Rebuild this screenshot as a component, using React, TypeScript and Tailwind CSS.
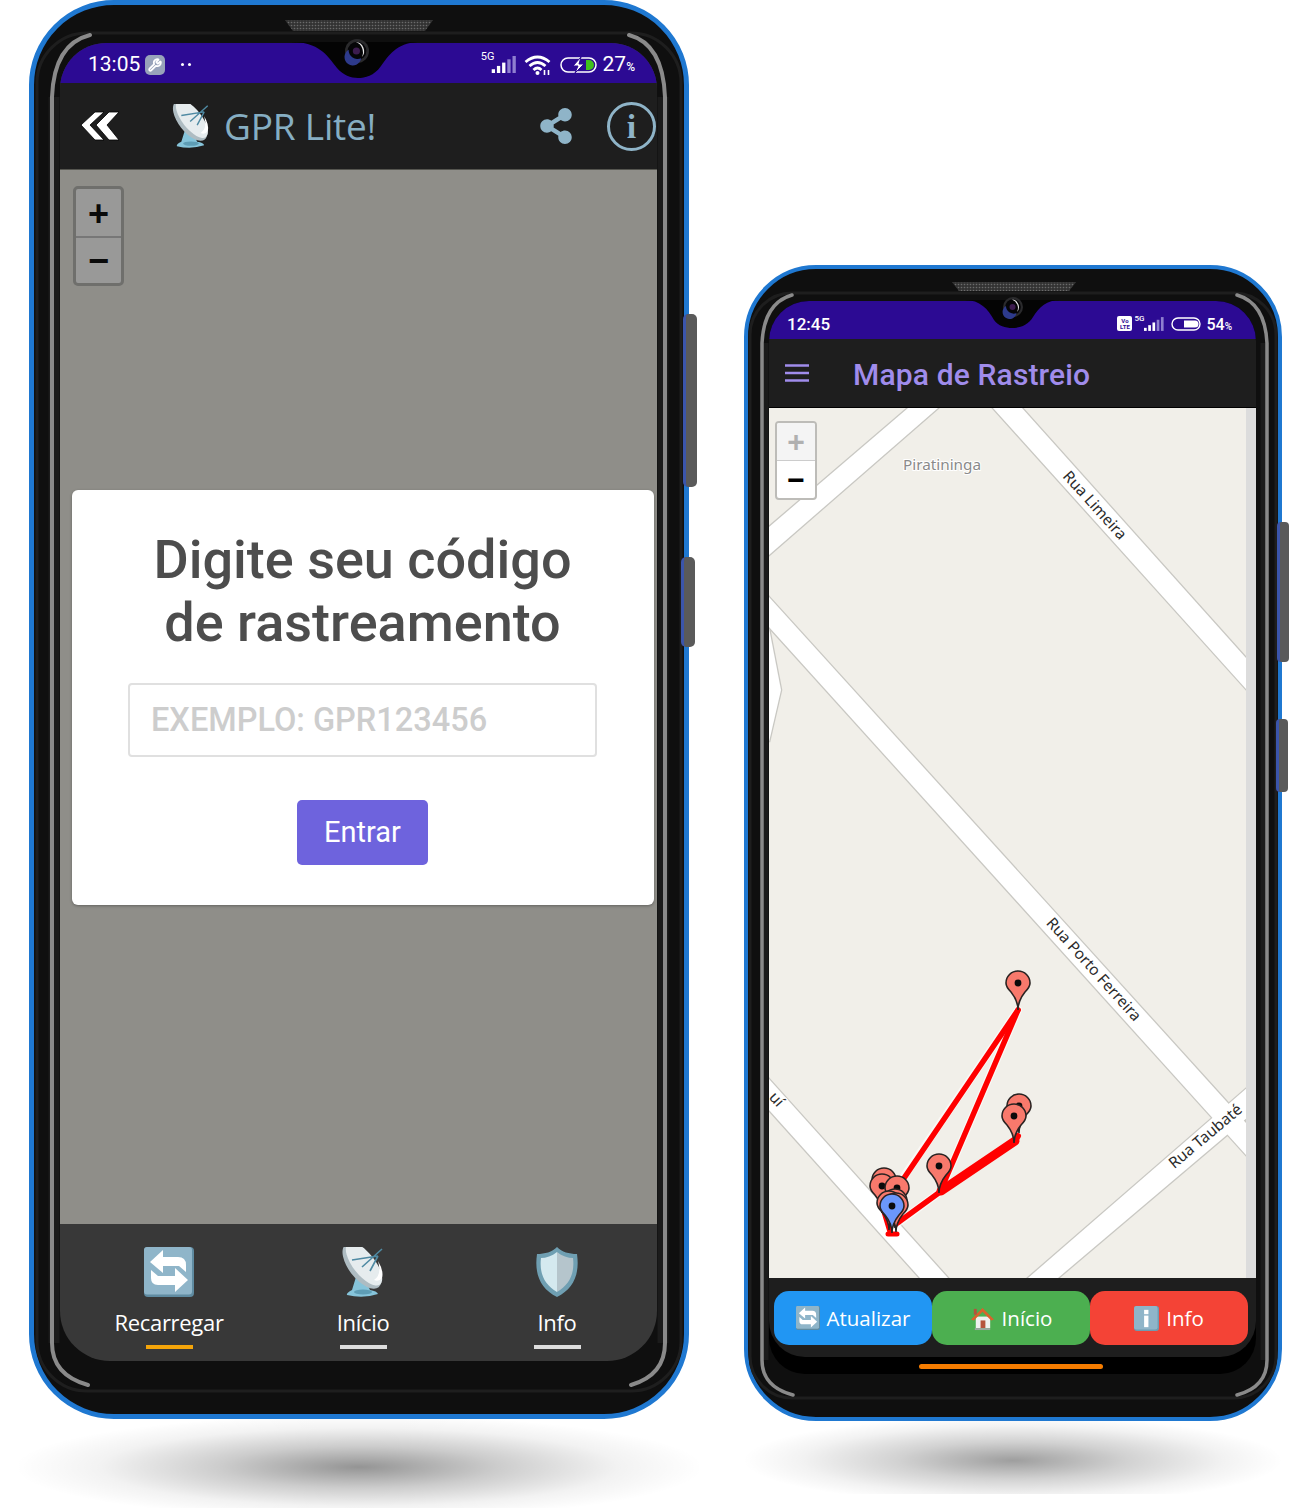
import React from "react";
import { FaShareAlt } from "react-icons/fa";
import { Wrench } from "lucide-react";

function Satellite({ className }: { className: string }) {
  return (
    <svg viewBox="0 0 50 50" className={className}>
      <path d="M18 30 L14 43 Q8 46 9 48 Q25 52 40 47 Q39 44 32 43 L28 34 Z" fill="#86c4da" />
      <ellipse cx="25" cy="45" rx="9" ry="2.5" fill="#5e9db5" />
      <ellipse cx="24" cy="19" rx="27" ry="13" transform="rotate(52 24 19)" fill="#aebcc2" />
      <ellipse cx="26" cy="17" rx="26" ry="11" transform="rotate(52 26 17)" fill="#e6ecee" />
      <path d="M36 33 Q44 28 40 14 Q46 24 44 31 Q41 35 36 33Z" fill="#ffffff" />
      <path d="M24 20 L44 2 M14 13 L40 9 M40 9 L32 24" stroke="#4f8aa3" strokeWidth="1.6" fill="none" />
    </svg>
  );
}

function RepeatSquare({ className }: { className: string }) {
  return (
    <svg viewBox="0 0 50 50" className={className}>
      <rect x="0" y="0" width="50" height="50" rx="4" fill="#5f8ba1" />
      <rect x="0" y="0" width="48" height="47.5" rx="3" fill="#8fb5c9" />
      <path d="M6 15 L19 3 V10 H34 Q42 10 42 18 V25 L35 19 H19 V26 Z" fill="#fff" />
      <path d="M44 33 L31 45 V38 H14 Q7 38 7 31 V23 L14 29 H31 V21 Z" fill="#fff" />
    </svg>
  );
}

function Shield({ className }: { className: string }) {
  return (
    <svg viewBox="0 0 50 50" className={className}>
      <path d="M25 0 C30 5 37 7 45 7 C48 28 41 42 25 50 C9 42 2 28 5 7 C13 7 20 5 25 0 Z" fill="#6f9fb2" />
      <path d="M25 5 C20 9 14 11 9 11 C7 27 13 38 25 45 Z" fill="#d4e9ef" />
      <path d="M25 5 C30 9 36 11 41 11 C43 27 37 38 25 45 Z" fill="#b5c5cc" />
    </svg>
  );
}

function House() {
  return (
    <svg viewBox="0 0 26 26" className="h-[25px] w-[25px]">
      <rect x="6" y="11" width="15" height="12" fill="#eef0ee" />
      <rect x="11" y="15" width="5" height="8" fill="#b5533c" />
      <path d="M1 14 L13 2 L25 14 L22 15 L13 6 L4 15 Z" fill="#d9622b" />
      <rect x="4" y="3" width="3" height="6" fill="#b5533c" />
      <rect x="5" y="23" width="16" height="2" fill="#9aa7a0" />
    </svg>
  );
}

function InfoSquare() {
  return (
    <svg viewBox="0 0 26 26" className="h-[25px] w-[25px]">
      <rect width="26" height="26" rx="3" fill="#6f9bb0" />
      <rect width="24.5" height="24.5" rx="2.5" fill="#8fb5c9" />
      <rect x="10.5" y="4" width="4.5" height="4.5" fill="#fff" />
      <rect x="10.5" y="10" width="4.5" height="12" fill="#fff" />
    </svg>
  );
}

function Camera({ cx, cy, r }: { cx: number; cy: number; r: number }) {
  return (
    <g>
      <circle cx={cx} cy={cy} r={r} fill="#2a2a2c" />
      <circle cx={cx} cy={cy} r={r * 0.78} fill="#050507" />
      <path
        d={`M${cx - r * 0.7} ${cy - r * 0.1} A${r * 0.7} ${r * 0.7} 0 1 0 ${cx + r * 0.35} ${cy + r * 0.6} A${r * 0.75} ${r * 0.75} 0 0 1 ${cx - r * 0.7} ${cy - r * 0.1}Z`}
        fill="#2d3a8c"
      />
      <path
        d={`M${cx - r * 0.1} ${cy - r * 0.75} A${r * 0.75} ${r * 0.75} 0 0 1 ${cx + r * 0.4} ${cy + r * 0.5} A${r * 0.9} ${r * 0.9} 0 0 0 ${cx - r * 0.1} ${cy - r * 0.75}Z`}
        fill="#e8e8e8"
      />
      <circle cx={cx - r * 0.05} cy={cy} r={r * 0.3} fill="#3c1c4f" />
    </g>
  );
}

function Bars({ className }: { className: string }) {
  return (
    <svg viewBox="0 0 26 18" className={className}>
      <rect x="0" y="14" width="3.5" height="4" fill="#fff" />
      <rect x="5.5" y="10.5" width="3.5" height="7.5" fill="#fff" />
      <rect x="11" y="7" width="3.5" height="11" fill="#fff" />
      <rect x="16.5" y="3.5" width="3.5" height="14.5" fill="#8f7fd0" />
      <rect x="22" y="0" width="3.5" height="18" fill="#8f7fd0" />
    </svg>
  );
}

function Roads() {
  const polys = [
    "908,408 938,408 769,555 769,527",
    "993,408 1022,408 1247,659 1247,690",
    "769,597 1247,1124 1247,1156 769,627",
    "1247,1088 1247,1118 1058,1278 1028,1278",
    "769,1079 948,1278 920,1278 769,1110",
    "769,628 781,690 769,742",
  ];
  return (
    <g>
      {polys.map((p) => (
        <polygon key={p} points={p} fill="#fff" stroke="#c9c8c3" strokeWidth="2.6" />
      ))}
      {polys.map((p) => (
        <polygon key={p + "f"} points={p} fill="#fff" />
      ))}
    </g>
  );
}

function Pin({ x, y, fill = "#f8796c" }: { x: number; y: number; fill?: string }) {
  return (
    <g transform={`translate(${x} ${y})`}>
      <path
        d="M0 0 C0 -8 -3 -13 -7 -18 C-10 -21 -12 -24 -12 -27 A12 12 0 1 1 12 -27 C12 -24 10 -21 7 -18 C3 -13 0 -8 0 0 Z"
        fill={fill}
        stroke="#2a2322"
        strokeWidth="1.6"
      />
      <circle cx="0" cy="-27" r="3.4" fill="#0b0b0b" />
    </g>
  );
}

function MapLabel({ x, y, a, children }: { x: number; y: number; a: number; children: React.ReactNode }) {
  return (
    <text
      x={x}
      y={y}
      transform={`rotate(${a} ${x} ${y})`}
      textAnchor="middle"
      dominantBaseline="middle"
      fontFamily="'Noto Sans', sans-serif"
      fontSize="15.5"
      fill="#2b2b2b"
      stroke="#fff"
      strokeWidth="2.5"
      paintOrder="stroke"
    >
      {children}
    </text>
  );
}

function TrackMap() {
  return (
    <svg viewBox="769 408 477 870" className="h-[870px] w-[477px]">
      <rect x="769" y="408" width="477" height="870" fill="#f1efe9" />
      <Roads />
      <text
        x="942"
        y="466"
        textAnchor="middle"
        dominantBaseline="middle"
        fontFamily="'Noto Sans', sans-serif"
        fontSize="15.3"
        fill="#8a8a8a"
        stroke="#fff"
        strokeWidth="2"
        paintOrder="stroke"
      >
        Piratininga
      </text>
      <MapLabel x={1094} y={506} a={48}>Rua Limeira</MapLabel>
      <MapLabel x={1093} y={970} a={48}>Rua Porto Ferreira</MapLabel>
      <MapLabel x={1206} y={1137} a={-40}>Rua Taubaté</MapLabel>
      <MapLabel x={776} y={1100} a={48}>uí</MapLabel>
      <g fill="none" stroke="#fff" strokeWidth="8" strokeOpacity="0.6" strokeLinecap="round">
        <path d="M1018 1010 L900 1182 M1018 1010 L940 1192 L894 1226" />
      </g>
      <g fill="none" stroke="#ff0000" strokeLinecap="round" strokeLinejoin="round">
        <path d="M1018 1010 L900 1184" strokeWidth="5.5" />
        <path d="M1018 1010 L940 1192" strokeWidth="5.5" />
        <path d="M940 1192 L896 1224" strokeWidth="5.5" />
        <path d="M941 1191 L1015 1141" strokeWidth="9" />
        <path d="M1015 1141 L1018 1136" strokeWidth="6" />
        <path d="M888 1234 L897 1234" strokeWidth="5" />
        <path d="M884 1212 L890 1232" strokeWidth="5" />
      </g>
      <Pin x={1018} y={1010} />
      <Pin x={1019} y={1133} />
      <Pin x={1014} y={1143} />
      <Pin x={939} y={1193} />
      <Pin x={884} y={1207} />
      <Pin x={882} y={1213} />
      <Pin x={897} y={1215} />
      <Pin x={895} y={1228} />
      <Pin x={889} y={1230} />
      <Pin x={896} y={1232} />
      <Pin x={892} y={1233} fill="#6b97fb" />
    </svg>
  );
}

function Phone1() {
  return (
    <div className="relative box-border h-[1419px] w-[660px] rounded-[85px] border-[5px] border-[#1f78d1] bg-[#0f0f0f] pl-[26px] pr-[27px] pt-[38px]">
      <div className="flex h-[1318px] flex-col overflow-hidden rounded-t-[46px] rounded-b-[50px] bg-[#383838]">
        <div className="flex h-[40px] shrink-0 items-center bg-[#2c0a93] pl-[28px] pr-[22px] pt-[3px] font-['Roboto',sans-serif] text-white">
          <span className="text-[21px]">13:05</span>
          <span className="ml-[5px] flex h-[20px] w-[20px] items-center justify-center rounded-[5px] bg-[#98a3ba]">
            <Wrench size={14} strokeWidth={3} color="#ffffff" />
          </span>
          <span className="ml-[16px] flex gap-[4px]">
            <span className="h-[3px] w-[3px] rounded-full bg-white" />
            <span className="h-[3px] w-[3px] rounded-full bg-white" />
          </span>
          <span className="ml-auto -mt-[14px] text-[11px]">5G</span>
          <Bars className="-ml-[4px] h-[17px] w-[26px]" />
          <svg viewBox="0 0 26 20" className="ml-[7px] h-[20px] w-[27px]">
            <path d="M1 7 Q13 -3 25 7 M5 11 Q13 4 21 11 M9 15 Q13 11 17 15" fill="none" stroke="#fff" strokeWidth="2.8" />
            <circle cx="13" cy="18" r="2" fill="#fff" />
            <path d="M20 15 V20 M24 15 V20" stroke="#fff" strokeWidth="1.6" />
          </svg>
          <svg viewBox="0 0 37 16" className="ml-[9px] h-[16px] w-[37px]">
            <rect x="1" y="1" width="35" height="14" rx="7" fill="none" stroke="#fff" strokeWidth="1.5" />
            <path d="M26 3 H29 A5 5 0 0 1 29 13 H26 Z" fill="#3fc21c" />
            <path d="M21 0 L13 9 H18 L15 16 L24 7 H19 Z" fill="#fff" stroke="#2c0a93" strokeWidth="1" />
          </svg>
          <span className="ml-[6px] text-[21px] leading-none">27</span>
          <span className="mt-[5px] text-[12px] font-medium leading-none">%</span>
        </div>
        <div className="flex h-[87px] shrink-0 items-center border-b border-[#55554f] bg-[#1e1e1e] pl-[20px] pr-[1px]">
          <svg viewBox="0 0 40 30" className="h-[30px] w-[40px]">
            <polygon points="1,14 15,1 24,1 10,14 24,29 15,29" fill="#fff" stroke="#000" strokeWidth="0.8" />
            <polygon points="16,14 29,1 39,1 27,14 39,29 29,29" fill="#fff" stroke="#000" strokeWidth="0.8" />
          </svg>
          <Satellite className="ml-[49px] h-[44px] w-[44px]" />
          <span className="ml-[11px] font-['Open_Sans',sans-serif] text-[37px] tracking-[-0.2px] text-[#86aec3]">GPR Lite!</span>
          <span className="ml-auto text-[#8fb4c8]">
            <FaShareAlt size={36} />
          </span>
          <span className="ml-[33px] flex h-[49px] w-[49px] items-center justify-center rounded-full border-[3px] border-[#8fb4c8] font-['Liberation_Serif',serif] text-[34px] font-bold text-[#8fb4c8]">
            i
          </span>
        </div>
        <div className="relative flex-1 bg-[#8f8e89] pl-[12px] pr-[3px] pt-[320px]">
          <div className="absolute left-[13px] top-[16px] flex h-[100px] w-[51px] flex-col rounded-[5px] border-[3px] border-[#6f6f6c] bg-[#999998] font-['Liberation_Sans',sans-serif] text-[36px] font-bold leading-none text-[#0a0a0a]">
            <span className="flex flex-1 items-center justify-center border-b-2 border-[#777] pt-[3px]">+</span>
            <span className="flex flex-1 items-center justify-center pt-[2px]">−</span>
          </div>
          <div className="box-border flex h-[415px] w-[582px] flex-col items-center rounded-[6px] bg-white pr-[1px] pt-[38px] font-['Roboto',sans-serif] shadow-[0_1px_3px_rgba(0,0,0,0.3)]">
            <h1 className="text-center text-[54px] font-medium leading-[63px] text-[#4d4d4d]">
              Digite seu código
              <br />
              de rastreamento
            </h1>
            <input
              readOnly
              placeholder="EXEMPLO: GPR123456"
              className="mt-[29px] box-border h-[74px] w-[469px] rounded-[4px] border-2 border-[#e0e0e0] pl-[21px] text-[32.5px] font-medium text-[#ccc] placeholder:text-[#cdcdcd]"
            />
            <button className="mt-[43px] h-[65px] w-[131px] rounded-[5px] bg-[#6e63dd] text-[29px] text-white">Entrar</button>
          </div>
        </div>
        <div className="flex h-[137px] shrink-0 pl-[12px] pr-[3px] font-['Open_Sans',sans-serif] text-white">
          {[
            { l: "Recarregar", i: <RepeatSquare className="h-[50px] w-[50px]" />, c: "bg-[#f5a50a]" },
            { l: "Início", i: <Satellite className="h-[50px] w-[50px]" />, c: "bg-[#dddddd]" },
            { l: "Info", i: <Shield className="h-[50px] w-[50px]" />, c: "bg-[#dddddd]" },
          ].map((t) => (
            <div key={t.l} className="flex flex-1 flex-col items-center pt-[23px]">
              {t.i}
              <span className="mt-[8px] text-[22px] leading-[34px] tracking-[-0.3px]">{t.l}</span>
              <span className={`mt-[6px] h-[4px] w-[47px] ${t.c}`} />
            </div>
          ))}
        </div>
      </div>

      <svg viewBox="0 0 660 1419" className="pointer-events-none absolute -left-[5px] -top-[5px] h-[1419px] w-[660px]">
        <defs>
          <pattern id="dots1" width="3" height="3" patternUnits="userSpaceOnUse">
            <rect width="3" height="3" fill="#333" />
            <circle cx="1.5" cy="1.5" r="0.8" fill="#6b6b6b" />
          </pattern>
        </defs>
        <rect x="8" y="33" width="644" height="1358" rx="50" fill="none" stroke="#1e1e1e" strokeWidth="3" />
        <polygon points="256,20 404,20 396,31 264,31" fill="url(#dots1)" />
        <path d="M262 42 C290 42 298 55 308 68 C314 75 322 78 329 78 C336 78 345 76 352 66 C362 52 370 42 392 42 Z" fill="#040404" />
        <Camera cx={328} cy={51} r={12} />
        <g fill="none" stroke="#1b1b1b" strokeWidth="11">
          <path d="M25 1343 V97" />
          <path d="M634 1343 V97" />
        </g>
        <g fill="none" stroke="#8a8a8a" strokeWidth="4" strokeLinecap="round">
          <path d="M61 35 Q25 44 23 97 V1343 Q23 1375 59 1385" />
          <path d="M600 35 Q634 44 636 97 V1343 Q636 1375 602 1385" />
        </g>
      </svg>

      <div className="absolute left-[649px] top-[309px] h-[173px] w-[14px] rounded-[5px] border-l-[3px] border-[#3b55ab] bg-[#5a5a5a]" />
      <div className="absolute left-[647px] top-[552px] h-[90px] w-[14px] rounded-[5px] border-l-[3px] border-[#3b55ab] bg-[#5a5a5a]" />
    </div>
  );
}

function Phone2() {
  return (
    <div className="relative box-border h-[1156px] w-[538px] rounded-[72px] border-4 border-[#1f78d1] bg-[#0f0f0f] pl-[21px] pr-[22px] pt-[32px]">
      <div className="flex h-[1073px] flex-col overflow-hidden rounded-t-[40px] rounded-b-[36px] bg-black">
        <div className="flex h-[38px] shrink-0 items-center bg-[#2c0a93] pl-[18px] pr-[24px] pt-[1px] font-['Roboto',sans-serif] font-medium text-white">
          <span className="mt-[8px] text-[17px]">12:45</span>
          <span className="ml-auto mt-[6px] flex h-[15px] w-[15px] flex-col items-center justify-center rounded-[2px] bg-white text-[6px] font-bold leading-[6px] text-[#2c0a93]">
            <span>Vo</span>
            <span>LTE</span>
          </span>
          <span className="-mt-[4px] ml-[2px] text-[8px]">5G</span>
          <Bars className="mt-[6px] h-[14px] w-[20px]" />
          <svg viewBox="0 0 30 14" className="ml-[7px] mt-[6px] h-[14px] w-[30px]">
            <rect x="1" y="1" width="28" height="12" rx="6" fill="none" stroke="#fff" strokeWidth="1.4" />
            <path d="M13 3.5 H24 A3.5 3.5 0 0 1 24 10.5 H13 Z" fill="#fff" />
          </svg>
          <span className="ml-[5px] mt-[8px] text-[16px]">54</span>
          <span className="mt-[11px] text-[10px]">%</span>
        </div>
        <div className="flex h-[69px] shrink-0 items-center border-b border-black bg-[#1e1e1e] pl-[16px]">
          <svg viewBox="0 0 24 18" className="h-[18px] w-[24px]">
            <path d="M0 1.5 H24 M0 9 H24 M0 16.5 H24" stroke="#a08ceb" strokeWidth="2.4" />
          </svg>
          <span className="ml-[44px] mt-[3px] font-['Roboto',sans-serif] text-[30px] font-medium tracking-[0.15px] text-[#a08ceb]">Mapa de Rastreio</span>
        </div>
        <div className="relative flex h-[870px] shrink-0">
          <TrackMap />
          <div className="w-[10px] bg-[#dcdcdc]" />
          <div className="absolute left-[6px] top-[13px] flex h-[79px] w-[42px] flex-col overflow-hidden rounded-[4px] border-2 border-[#bdbcb8] bg-white font-['Liberation_Sans',sans-serif] text-[30px] font-bold leading-none">
            <span className="flex flex-1 items-center justify-center border-b border-[#ccc] bg-[#f4f4f4] text-[#b0b0b0]">+</span>
            <span className="flex flex-1 items-center justify-center text-black">−</span>
          </div>
        </div>
        <div className="flex h-[79px] shrink-0 rounded-b-[36px] bg-[#1e1e1e] pl-[5px] pt-[13px] font-['Open_Sans',sans-serif] text-[20.5px] text-white">
          <span className="flex h-[54px] w-[158px] items-center justify-center gap-[7px] rounded-[15px] bg-[#2196f3]">
            <RepeatSquare className="h-[24px] w-[24px]" />
            Atualizar
          </span>
          <span className="flex h-[54px] w-[158px] items-center justify-center gap-[7px] rounded-[15px] bg-[#4caf50]">
            <House />
            Início
          </span>
          <span className="flex h-[54px] w-[158px] items-center justify-center gap-[7px] rounded-[15px] bg-[#f44336]">
            <InfoSquare />
            Info
          </span>
        </div>
        <div className="flex h-[17px] shrink-0 justify-center pr-[3px] pt-[7px]">
          <span className="h-[5px] w-[184px] rounded-full bg-[#f57c00]" />
        </div>
      </div>

      <svg viewBox="0 0 538 1156" className="pointer-events-none absolute -left-[4px] -top-[4px] h-[1156px] w-[538px]">
        <defs>
          <pattern id="dots2" width="3" height="3" patternUnits="userSpaceOnUse">
            <rect width="3" height="3" fill="#333" />
            <circle cx="1.5" cy="1.5" r="0.8" fill="#6b6b6b" />
          </pattern>
        </defs>
        <rect x="6" y="28" width="526" height="1105" rx="42" fill="none" stroke="#1e1e1e" strokeWidth="3" />
        <polygon points="208,17 332,17 325,26 215,26" fill="url(#dots2)" />
        <path d="M221 35 C236 35 244 44 250 55 C254 61 262 63 268 63 C274 63 284 61 289 52 C295 42 303 35 316 35 Z" fill="#040404" />
        <Camera cx={269} cy={42} r={10} />
        <g fill="none" stroke="#1b1b1b" strokeWidth="7">
          <path d="M21 1095 V78" />
          <path d="M520 1095 V78" />
        </g>
        <g fill="none" stroke="#8a8a8a" strokeWidth="3.5" strokeLinecap="round">
          <path d="M48 30 Q20 38 18 78 V1095 Q18 1122 49 1130" />
          <path d="M493 30 Q521 38 523 78 V1095 Q523 1122 493 1130" />
        </g>
      </svg>

      <div className="absolute left-[529px] top-[253px] h-[140px] w-[12px] rounded-[4px] border-l-[3px] border-[#3b55ab] bg-[#5a5a5a]" />
      <div className="absolute left-[528px] top-[450px] h-[73px] w-[12px] rounded-[4px] border-l-[3px] border-[#3b55ab] bg-[#5a5a5a]" />
    </div>
  );
}

export default function App() {
  return (
    <div className="flex h-[1508px] w-[1297px] items-start overflow-hidden bg-white pl-[29px]">
      <div className="flex w-[660px] shrink-0 flex-col">
        <Phone1 />
        <div className="-mx-[10px] h-[89px] bg-[radial-gradient(ellipse_345px_52px_at_50%_54%,rgba(0,0,0,0.42),rgba(0,0,0,0.2)_40%,rgba(0,0,0,0.05)_75%,transparent)]" />
      </div>
      <div className="ml-[55px] mt-[265px] flex w-[538px] shrink-0 flex-col">
        <Phone2 />
        <div className="h-[73px] bg-[radial-gradient(ellipse_270px_44px_at_50%_54%,rgba(0,0,0,0.38),rgba(0,0,0,0.18)_42%,rgba(0,0,0,0.05)_78%,transparent)]" />
      </div>
    </div>
  );
}
